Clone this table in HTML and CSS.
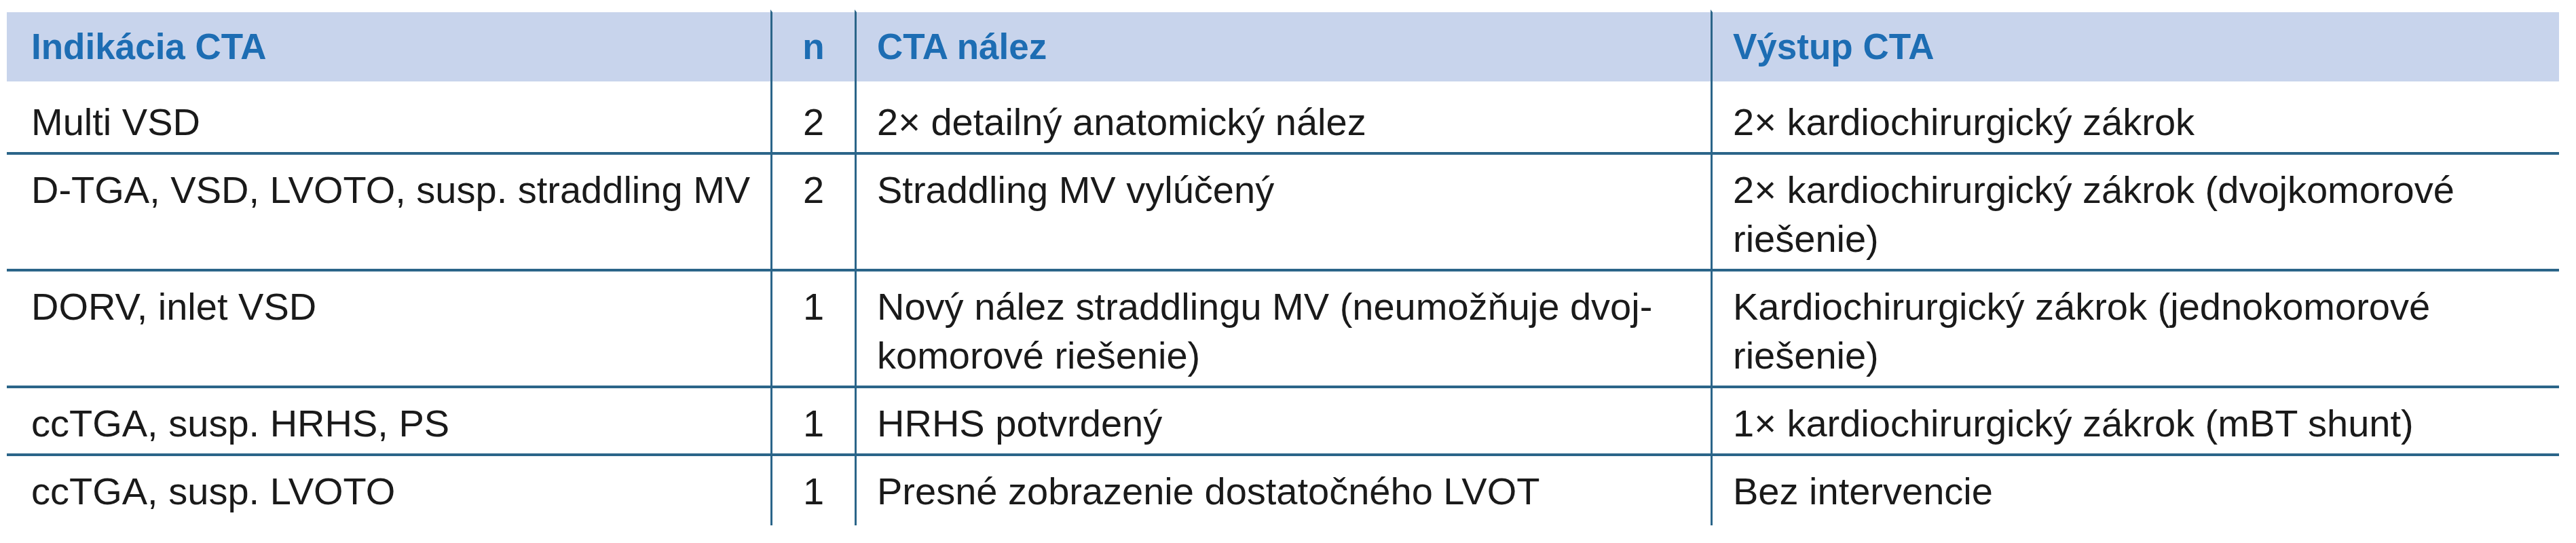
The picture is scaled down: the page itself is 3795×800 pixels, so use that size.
FILE: index.html
```html
<!DOCTYPE html>
<html lang="sk">
<head>
<meta charset="utf-8">
<title>Indikácia CTA</title>
<link rel="stylesheet" href="styles.css">
</head>
<body>
<table class="cta">
  <colgroup>
    <col class="c-ind">
    <col class="c-n">
    <col class="c-nal">
    <col class="c-out">
  </colgroup>
  <thead>
    <tr>
      <th class="first">Indikácia CTA</th>
      <th class="num">n</th>
      <th>CTA nález</th>
      <th>Výstup CTA</th>
    </tr>
  </thead>
  <tbody>
    <tr class="r1">
      <td class="first">Multi VSD</td>
      <td class="num">2</td>
      <td>2× detailný anatomický nález</td>
      <td>2× kardiochirurgický zákrok</td>
    </tr>
    <tr>
      <td class="first">D-TGA, VSD, LVOTO, susp. straddling MV</td>
      <td class="num">2</td>
      <td>Straddling MV vylúčený</td>
      <td>2× kardiochirurgický zákrok (dvojkomorové<br>riešenie)</td>
    </tr>
    <tr>
      <td class="first">DORV, inlet VSD</td>
      <td class="num">1</td>
      <td>Nový nález straddlingu MV (neumožňuje dvoj-<br>komorové riešenie)</td>
      <td>Kardiochirurgický zákrok (jednokomorové<br>riešenie)</td>
    </tr>
    <tr>
      <td class="first">ccTGA, susp. HRHS, PS</td>
      <td class="num">1</td>
      <td>HRHS potvrdený</td>
      <td>1× kardiochirurgický zákrok (mBT shunt)</td>
    </tr>
    <tr class="last">
      <td class="first">ccTGA, susp. LVOTO</td>
      <td class="num">1</td>
      <td>Presné zobrazenie dostatočného LVOT</td>
      <td>Bez intervencie</td>
    </tr>
  </tbody>
</table>
</body>
</html>
```

FILE: styles.css
```css
html, body {
  margin: 0;
  padding: 0;
  background: #ffffff;
}

body {
  padding: 14px 0 0 10px;
  font-family: "Liberation Sans", Arial, sans-serif;
  color: #1a1a1a;
}

.cta {
  width: 3760px;
  table-layout: fixed;
  border-collapse: separate;
  border-spacing: 0;
}

.c-ind { width: 1125px; }
.c-n { width: 124px; }
.c-nal { width: 1261px; }
.c-out { width: 1250px; }

.cta th,
.cta td {
  text-align: left;
  vertical-align: top;
  padding: 16px 20px 8px 30px;
  border-left: 3px solid #2b6589;
}

.cta th {
  background: #c8d4ec;
  background-clip: padding-box;
  border-top: 4px solid #ffffff;
  color: #1d6db3;
  font-weight: bold;
  font-size: 53px;
  line-height: 102px;
  height: 102px;
  padding-top: 0;
  padding-bottom: 0;
  vertical-align: middle;
}

.cta td {
  font-size: 56px;
  line-height: 72px;
  border-bottom: 4px solid #2b6589;
}

.cta .first {
  border-left: none;
  padding-left: 36px;
}

.cta .num {
  text-align: center;
  padding-left: 0;
  padding-right: 0;
}

.cta .r1 td {
  padding-top: 24px;
}

.cta .last td {
  border-bottom: none;
  padding-bottom: 14px;
}
```
